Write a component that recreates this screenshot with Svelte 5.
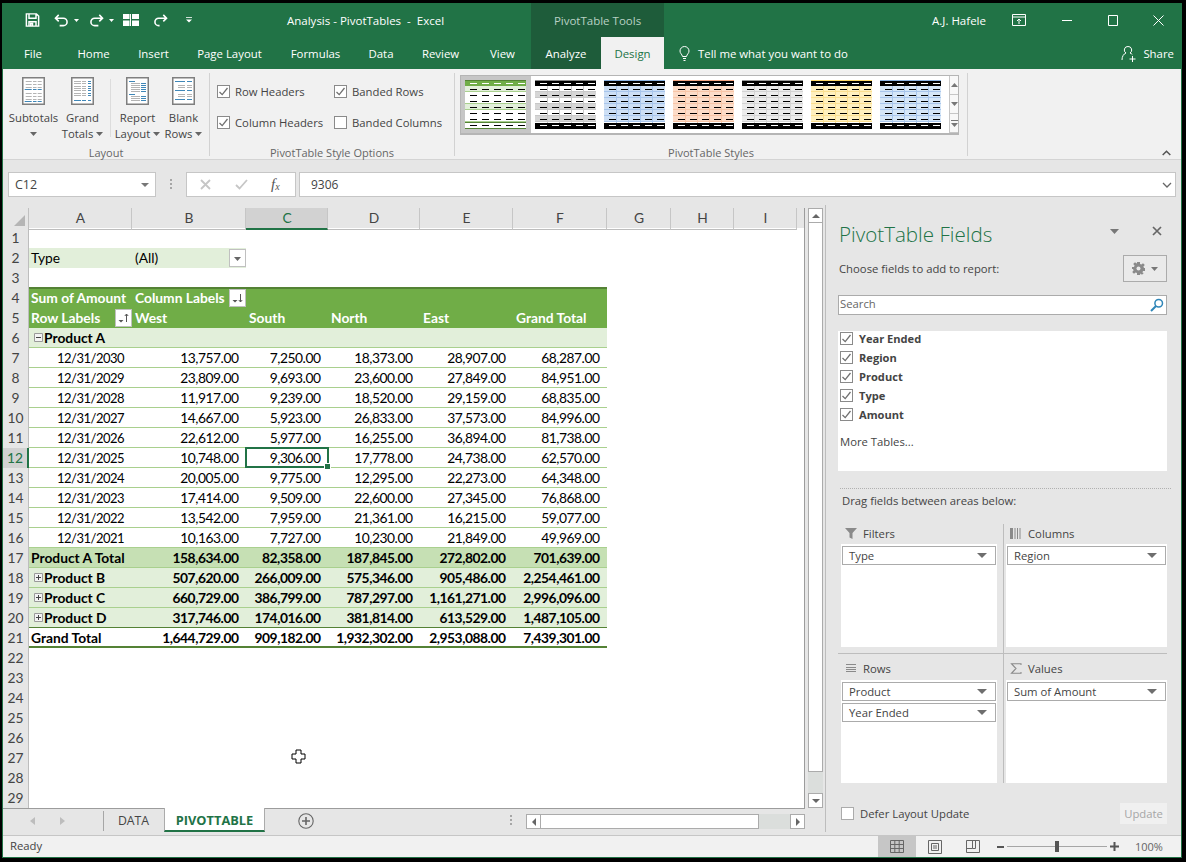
<script lang="ts">
  // ---- sheet data ----
  const rows = [
    { n: 1, kind: "blank", cells: [] },
    { n: 2, kind: "filter", cells: ["Type", "(All)"] },
    { n: 3, kind: "blank", cells: [] },
    { n: 4, kind: "head headtop", cells: ["Sum of Amount", "Column Labels"] },
    { n: 5, kind: "head", cells: ["Row Labels", "West", "South", "North", "East", "Grand Total"] },
    { n: 6, kind: "prod", tree: "minus", cells: ["Product A", "", "", "", "", ""] },
    { n: 7, kind: "item", cells: ["12/31/2030", "13,757.00", "7,250.00", "18,373.00", "28,907.00", "68,287.00"] },
    { n: 8, kind: "item", cells: ["12/31/2029", "23,809.00", "9,693.00", "23,600.00", "27,849.00", "84,951.00"] },
    { n: 9, kind: "item", cells: ["12/31/2028", "11,917.00", "9,239.00", "18,520.00", "29,159.00", "68,835.00"] },
    { n: 10, kind: "item", cells: ["12/31/2027", "14,667.00", "5,923.00", "26,833.00", "37,573.00", "84,996.00"] },
    { n: 11, kind: "item", cells: ["12/31/2026", "22,612.00", "5,977.00", "16,255.00", "36,894.00", "81,738.00"] },
    { n: 12, kind: "item", cells: ["12/31/2025", "10,748.00", "9,306.00", "17,778.00", "24,738.00", "62,570.00"] },
    { n: 13, kind: "item", cells: ["12/31/2024", "20,005.00", "9,775.00", "12,295.00", "22,273.00", "64,348.00"] },
    { n: 14, kind: "item", cells: ["12/31/2023", "17,414.00", "9,509.00", "22,600.00", "27,345.00", "76,868.00"] },
    { n: 15, kind: "item", cells: ["12/31/2022", "13,542.00", "7,959.00", "21,361.00", "16,215.00", "59,077.00"] },
    { n: 16, kind: "item", cells: ["12/31/2021", "10,163.00", "7,727.00", "10,230.00", "21,849.00", "49,969.00"] },
    { n: 17, kind: "total", cells: ["Product A Total", "158,634.00", "82,358.00", "187,845.00", "272,802.00", "701,639.00"] },
    { n: 18, kind: "prod", tree: "plus", cells: ["Product B", "507,620.00", "266,009.00", "575,346.00", "905,486.00", "2,254,461.00"] },
    { n: 19, kind: "prod", tree: "plus", cells: ["Product C", "660,729.00", "386,799.00", "787,297.00", "1,161,271.00", "2,996,096.00"] },
    { n: 20, kind: "prod last", tree: "plus", cells: ["Product D", "317,746.00", "174,016.00", "381,814.00", "613,529.00", "1,487,105.00"] },
    { n: 21, kind: "grand", cells: ["Grand Total", "1,644,729.00", "909,182.00", "1,932,302.00", "2,953,088.00", "7,439,301.00"] },
    ...Array.from({ length: 8 }, (_, i) => ({ n: 22 + i, kind: "blank", cells: [] }))
  ];
  const columns = ["A", "B", "C", "D", "E", "F", "G", "H", "I"];
  const tabs = ["File", "Home", "Insert", "Page Layout", "Formulas", "Data", "Review", "View"];

  // ribbon document icons: [x, y, width, colour]
  const G = "#b4b4b4";
  const B = "#3f87b8";
  const row3 = (y, c1, c2, c3, xs) => [[xs[0], y, xs[1], c1], [xs[2], y, xs[3], c2], [xs[4], y, xs[5], c3]];
  const sub = [3.7, 6, 11, 3.5, 15.7, 4];
  const grand = [3, 7, 11, 4, 17, 3];
  const iconSubtotals = [4, 7, 10, 16, 19, 22].flatMap((y) => row3(y, G, G, G, sub))
    .concat(row3(12, B, B, B, [2.7, 7, 11, 3.5, 15.7, 4]), row3(24, B, B, B, [2.7, 7, 11, 3.5, 15.7, 4]));
  const iconGrand = [4, 6, 9, 11, 13, 16, 18].flatMap((y) => row3(y, G, G, B, grand)).concat(row3(23, B, B, B, grand));
  const iconReport = [
    [3, 4, 6, B], [5, 6, 9, G], [15, 6, 5, B], [5, 8, 9, G], [15, 8, 5, B], [5, 10, 9, G], [15, 10, 5, B],
    [5, 12, 9, G], [15, 12, 5, B], [5, 14, 9, G], [15, 14, 5, B], [3, 17, 6, B], [5, 19, 9, G], [15, 19, 5, B],
    [5, 21, 9, G], [15, 21, 5, B], [5, 23, 9, G], [15, 23, 5, B]
  ];
  const iconBlank = [
    [3, 4, 10, B], [15, 4, 5, B], [6, 8, 7, G], [15, 8, 5, G], [6, 10, 7, G], [15, 10, 5, G],
    [3, 13, 10, B], [15, 13, 5, B], [6, 17, 7, G], [15, 17, 5, G], [6, 19, 7, G], [15, 19, 5, G], [3, 22, 10, B], [15, 22, 5, B]
  ];

  // style gallery
  const gallery = [
    { bar: "#70ad47", top: "#548235", dash: "#fff", a: "#e2efda", b: "#fff", line: "#a9d08e", green: true },
    { bar: "#000", top: "#888", dash: "#fff", a: "#fff", b: "#d6d6d6", line: "#c8c8c8", cols: true },
    { bar: "#000", top: "#8eb4e3", dash: "#fff", a: "#cddff5", b: "#cddff5", line: "#a9c6ec", cols: true },
    { bar: "#000", top: "#f4a582", dash: "#fff", a: "#fcdcc8", b: "#fcdcc8", line: "#f8c6a8", cols: true },
    { bar: "#000", top: "#999", dash: "#fff", a: "#ececec", b: "#ececec", line: "#d4d4d4", cols: true },
    { bar: "#000", top: "#ffd966", dash: "#fff", a: "#fff0bf", b: "#fff0bf", line: "#fbdf90", cols: true },
    { bar: "#000", top: "#8eb4e3", dash: "#fff", a: "#d5e6f7", b: "#d5e6f7", line: "#a9c6ec", cols: true }
  ];
  const dashX = [5, 17, 29, 41, 53];
  const rowY = [6, 12, 18, 24, 30, 36];
  const bandFill = (s, r) => {
    if (s.green) return r === 0 || r === 3 ? s.a : s.b;
    return r % 2 === 0 ? s.a : s.b;
  };
</script>

{#snippet docIcon(lines)}
  <svg class="doc" width="23" height="28" viewBox="0 0 23 28">
    <rect x="0.75" y="0.75" width="21.5" height="26.5" fill="#fff" stroke="#7f7f7f" stroke-width="1.5" />
    {#each lines as l}
      <rect x={l[0]} y={l[1]} width={l[2]} height="1" fill={l[3]} />
    {/each}
  </svg>
{/snippet}

{#snippet check(on)}
  <span class="box">
    {#if on}
      <svg width="11" height="11" viewBox="0 0 11 11"><path d="M1.5 6 L4.2 8.6 L9.5 2" fill="none" stroke="#6f6f6f" stroke-width="1.3" /></svg>
    {/if}
  </span>
{/snippet}

{#snippet caret()}
  <svg class="caret" width="7" height="4" viewBox="0 0 7 4"><path d="M0 0h7L3.5 4z" fill="#666" /></svg>
{/snippet}

{#snippet fieldItem(label)}
  <div class="field-item"><span>{label}</span><svg width="10" height="5" viewBox="0 0 10 5"><path d="M0 0h10L5 5z" fill="#6e6e6e" /></svg></div>
{/snippet}

{#snippet filterBtn(kind)}
  <span class="pf-btn">
    <svg width="15" height="15" viewBox="0 0 15 15">
      {#if kind === "drop"}
        <path d="M4 6h7L7.5 10z" fill="#666" />
      {:else}
        <path d="M2.5 9h5L5 11.5z" fill="#555" />
        <path d="M10.5 3v8M8.8 {kind === 'asc' ? '5' : '9'}l1.7 {kind === 'asc' ? '-2' : '2'}l1.7 {kind === 'asc' ? '2' : '-2'}" fill="none" stroke="#555" stroke-width="1" />
      {/if}
    </svg>
  </span>
{/snippet}

<div class="window">
  <!-- Title bar -->
  <header class="titlebar">
    <div class="qat">
      <svg class="q1" width="15" height="14" viewBox="0 0 16 16"><path d="M1 1h11.5L15 3.5V15H1z M4 1v5h8V1 M4 15v-5h8v5 M6 12h2v3H6z" fill="none" stroke="#fff" stroke-width="1.7" /></svg>
      <svg class="q2" width="15" height="13" viewBox="0 0 16 14"><path d="M5 1L1.5 4.500 5 8M2 4.500h8a4 4 0 0 1 0 8H6" fill="none" stroke="#fff" stroke-width="1.700" /></svg>
      <svg class="qc" width="5" height="3" viewBox="0 0 5 3"><path d="M0 0h5L2.500 3z" fill="#fff" /></svg>
      <svg class="q3" width="15" height="13" viewBox="0 0 16 14"><path d="M11 1l3.500 3.500L11 8M14 4.500H6a4 4 0 0 0 0 8h4" fill="none" stroke="#fff" stroke-width="1.700" /></svg>
      <svg class="qc" width="5" height="3" viewBox="0 0 5 3"><path d="M0 0h5L2.500 3z" fill="#fff" /></svg>
      <svg class="q4" width="16" height="12" viewBox="0 0 16 12"><path d="M0 0h6.500v5H0zM9 0h7v5H9zM0 6.500h6.500V12H0zM9 6.500h7V12H9z" fill="#fff" /><path d="M7.500 0v12" stroke="#fff" /></svg>
      <svg class="q5" width="15" height="13" viewBox="0 0 16 14"><path d="M11 1l3.500 3.500L11 8M14 4.500H6a4 4 0 0 0 0 8h1" fill="none" stroke="#fff" stroke-width="1.700" /></svg>
      <svg class="q6" width="6" height="6" viewBox="0 0 7 7"><path d="M0 .5h7" stroke="#fff" /><path d="M0 3h7L3.500 6.500z" fill="#fff" /></svg>
    </div>
    <div class="doc-title">Analysis - PivotTables&nbsp; - &nbsp;Excel</div>
    <div class="tools">PivotTable Tools</div>
    <div class="user">A.J. Hafele</div>
    <div class="winbtns">
      <svg width="14" height="12" viewBox="0 0 14 12"><path d="M.5.500h13v11H.5zM.5 3h13M7 10V5M5 7l2-2 2 2" fill="none" stroke="#fff" /></svg>
      <svg width="11" height="11" viewBox="0 0 11 11"><path d="M0 5.500h10" stroke="#fff" /></svg>
      <svg width="11" height="11" viewBox="0 0 11 11"><path d="M.5.500h9v10h-9z" fill="none" stroke="#fff" /></svg>
      <svg width="11" height="11" viewBox="0 0 11 11"><path d="M.5.500l10 10M10.500.500l-10 10" stroke="#fff" fill="none" /></svg>
    </div>
  </header>

  <!-- Ribbon tabs -->
  <nav class="tabs">
    {#each tabs as t}<div class="tab">{t}</div>{/each}
    <div class="tab analyze">Analyze</div>
    <div class="tab design">Design</div>
    <div class="tellme">
      <svg width="11" height="15" viewBox="0 0 11 15"><path d="M3.500 10.500C3 8 1 7.500 1 5a4.500 4.500 0 0 1 9 0c0 2.500-2 3-2.500 5.500zM4 12.500h3M4.500 14.500h2" fill="none" stroke="#fff" /></svg>
      <span>Tell me what you want to do</span>
    </div>
    <div class="share">
      <svg width="16" height="17" viewBox="0 0 16 17"><path d="M7 1.500a3.500 3.500 0 0 1 2 6.500c1 .4 1.700.9 2.300 1.500M5 8a3.500 3.500 0 0 1 2-6.500M5 8c-2.500 1-4 3.500-4 7M11.500 11v6M8.500 14h6" fill="none" stroke="#fff" /></svg>
      <span>Share</span>
    </div>
  </nav>

  <!-- Ribbon -->
  <section class="ribbon">
    <div class="rgroup layout">
      <div class="cmds">
        <div class="cmd">{@render docIcon(iconSubtotals)}<div class="lbl">Subtotals</div><div class="lbl">{@render caret()}</div></div>
        <div class="cmd">{@render docIcon(iconGrand)}<div class="lbl">Grand</div><div class="lbl">Totals {@render caret()}</div></div>
        <div class="vsep"></div>
        <div class="cmd">{@render docIcon(iconReport)}<div class="lbl">Report</div><div class="lbl">Layout {@render caret()}</div></div>
        <div class="cmd">{@render docIcon(iconBlank)}<div class="lbl">Blank</div><div class="lbl">Rows {@render caret()}</div></div>
      </div>
      <div class="group-name">Layout</div>
    </div>
    <div class="rgroup options">
      <div class="checks">
        <label class="chk">{@render check(true)}Row Headers</label>
        <label class="chk">{@render check(true)}Banded Rows</label>
        <label class="chk">{@render check(true)}Column Headers</label>
        <label class="chk">{@render check(false)}Banded Columns</label>
      </div>
      <div class="group-name">PivotTable Style Options</div>
    </div>
    <div class="rgroup styles">
      <div class="gallery">
        {#each gallery as s, i}
          <div class="thumb" class:selected={i === 0}>
            <svg width="61" height="49" viewBox="0 0 61 49" shape-rendering="crispEdges">
              {#each rowY as y, r}
                <rect x="0" {y} width="61" height="6" fill={bandFill(s, r)} />
                <rect x="0" y={y + 5} width="61" height="1" fill={s.green && (r === 1 || r === 4) ? "#fff" : s.line} />
              {/each}
              {#if s.cols}
                {#each [12, 24, 36, 48] as x}<rect {x} y="6" width="1" height="37" fill={s.line} />{/each}
              {/if}
              <rect x="0" y="0" width="61" height="6" fill={s.bar} />
              <rect x="0" y="0" width="61" height="1" fill={s.top} />
              {#if s.green}
                <rect x="0" y="42" width="61" height="6" fill="#fff" />
                <rect x="0" y="42" width="61" height="1" fill="#548235" />
                <rect x="0" y="48" width="61" height="1" fill="#548235" />
              {:else}
                <rect x="0" y="43" width="61" height="6" fill={s.bar} />
                {#each dashX as x}<rect {x} y="45" width="7" height="1" fill={s.dash} />{/each}
              {/if}
              {#each dashX as x}
                <rect {x} y="3" width="7" height="1" fill={s.dash} />
                {#each rowY as y}<rect {x} y={y + 3} width="7" height="1" fill="#000" />{/each}
                {#if s.green}<rect {x} y="45" width="7" height="1" fill="#000" />{/if}
              {/each}
            </svg>
          </div>
        {/each}
        <div class="gal-scroll">
          <div><svg width="7" height="4" viewBox="0 0 7 4"><path d="M3.500 0L7 4H0z" fill="#777" /></svg></div>
          <div><svg width="7" height="4" viewBox="0 0 7 4"><path d="M0 0h7L3.500 4z" fill="#777" /></svg></div>
          <div><svg width="7" height="7" viewBox="0 0 7 7"><path d="M0 .5h7" stroke="#777" /><path d="M0 3h7L3.500 7z" fill="#777" /></svg></div>
        </div>
      </div>
      <div class="group-name">PivotTable Styles</div>
    </div>
    <svg class="collapse" width="9" height="6" viewBox="0 0 9 6"><path d="M.7 5L4.500 1.200 8.300 5" fill="none" stroke="#555" stroke-width="1.500" /></svg>
  </section>

  <!-- Formula bar -->
  <section class="formula">
    <div class="namebox"><span>C12</span><svg width="8" height="4" viewBox="0 0 8 4"><path d="M0 0h8L4 4z" fill="#777" /></svg></div>
    <div class="grip"><i></i><i></i><i></i></div>
    <div class="fbtns">
      <svg width="11" height="11" viewBox="0 0 11 11"><path d="M1 1l9 9M10 1l-9 9" stroke="#c6c6c6" stroke-width="1.800" fill="none" /></svg>
      <svg width="13" height="11" viewBox="0 0 13 11"><path d="M1 6l3.500 3.500L12 1" stroke="#c6c6c6" stroke-width="1.800" fill="none" /></svg>
      <span class="fx">f<sub>x</sub></span>
    </div>
    <div class="finput"><span>9306</span><svg width="10" height="6" viewBox="0 0 10 6"><path d="M1 1l4 4 4-4" fill="none" stroke="#666" stroke-width="1.300" /></svg></div>
  </section>

  <!-- Main area -->
  <div class="main">
    <div class="workbook">
      <div class="sheet-row">
        <div class="grid">
          <div class="row hdr">
            <div class="corner"><svg width="11" height="11" viewBox="0 0 11 11"><path d="M11 0v11H0z" fill="#b5b5b5" /></svg></div>
            {#each columns as c}<div class="colhead" class:sel={c === "C"}>{c}</div>{/each}
            <div></div>
          </div>
          {#each rows as r}
            <div class="row {r.kind}">
              <div class="rowhead" class:sel={r.n === 12}>{r.n}</div>
              {#if r.kind !== "blank"}
                {#each r.cells as cell, i}
                  <div class="cell" class:first={i === 0} class:current={r.n === 12 && i === 2}>
                    {#if i === 0 && r.tree}
                      <span class="tree">
                        <svg width="9" height="9" viewBox="0 0 9 9"><path d="M.5.500h8v8h-8z" fill="#f4f4f4" stroke="#9a9a9a" /><path d={r.tree === "plus" ? "M2 4.500h5M4.500 2v5" : "M2 4.500h5"} stroke="#444" /></svg>
                      </span>
                    {/if}
                    <span class="val">{cell}</span>
                    {#if r.n === 5 && i === 0}{@render filterBtn("asc")}{/if}
                    {#if r.n === 2 && i === 1}{@render filterBtn("drop")}{/if}
                    {#if r.n === 4 && i === 1}{@render filterBtn("desc")}{/if}
                  </div>
                {/each}
              {/if}
            </div>
          {/each}
          <svg class="pointer" width="15" height="15" viewBox="0 0 15 15"><path d="M5 1h5v4h4v5h-4v4H5v-4H1V5h4z" fill="#fff" stroke="#000" /></svg>
        </div>
        <div class="vscroll">
          <div class="sbtn"><svg width="8" height="4" viewBox="0 0 8 4"><path d="M4 0l4 4H0z" fill="#666" /></svg></div>
          <div class="vthumb"></div>
          <div class="vtrough"></div>
          <div class="sbtn"><svg width="8" height="4" viewBox="0 0 8 4"><path d="M0 0h8L4 4z" fill="#666" /></svg></div>
        </div>
      </div>
      <div class="tabbar">
        <svg class="nav1" width="5" height="8" viewBox="0 0 5 8"><path d="M5 0v8L0 4z" fill="#bdbdbd" /></svg>
        <svg class="nav2" width="5" height="8" viewBox="0 0 5 8"><path d="M0 0v8l5-4z" fill="#bdbdbd" /></svg>
        <div class="tabsep"></div>
        <div class="sheet-tab">DATA</div>
        <div class="sheet-tab active">PIVOTTABLE</div>
        <svg class="addsheet" width="16" height="16" viewBox="0 0 16 16"><circle cx="8" cy="8" r="7.200" fill="none" stroke="#666" stroke-width="1.100" /><path d="M8 4v8M4 8h8" stroke="#666" stroke-width="1.600" /></svg>
        <div class="hgrip"><i></i><i></i><i></i></div>
        <div class="hscroll">
          <div class="sbtn"><svg width="4" height="8" viewBox="0 0 4 8"><path d="M4 0v8L0 4z" fill="#666" /></svg></div>
          <div class="hthumb"></div>
          <div class="htrough"></div>
          <div class="sbtn"><svg width="4" height="8" viewBox="0 0 4 8"><path d="M0 0v8l4-4z" fill="#666" /></svg></div>
        </div>
      </div>
    </div>

    <!-- Field list -->
    <aside class="panel">
      <div class="panel-head">
        <h2>PivotTable Fields</h2>
        <svg class="pcaret" width="9" height="5" viewBox="0 0 9 5"><path d="M0 0h9L4.500 5z" fill="#777" /></svg>
        <svg class="pclose" width="10" height="10" viewBox="0 0 10 10"><path d="M1 1l8 8M9 1l-8 8" stroke="#666" stroke-width="1.700" /></svg>
      </div>
      <div class="choose">
        <span>Choose fields to add to report:</span>
        <div class="gear">
          <svg width="13" height="13" viewBox="0 0 13 13"><path d="M5 0h3v2l1.400.6L11 1.200 12.800 3l-1.400 1.600.6 1.400h1v3h-2l-.6 1.400L11.800 11 10 12.800l-1.600-1.400L8 13H5v-2l-1.400-.6L2 11.800.2 10l1.400-1.600L1 7H0V5h2l.6-1.400L1.200 2 3 .2l1.600 1.400L5 1z" fill="#8a8a8a" /><circle cx="6.500" cy="6.500" r="2" fill="#eaeaea" /></svg>
          <svg width="7" height="4" viewBox="0 0 7 4"><path d="M0 0h7L3.500 4z" fill="#777" /></svg>
        </div>
      </div>
      <div class="search">
        <span>Search</span>
        <svg width="14" height="14" viewBox="0 0 14 14"><circle cx="8.700" cy="5.300" r="3.800" fill="none" stroke="#2f86b8" stroke-width="1.500" /><path d="M6 8L1 13" stroke="#2f86b8" stroke-width="2" /></svg>
      </div>
      <div class="fields">
        {#each ["Year Ended", "Region", "Product", "Type", "Amount"] as f}
          <div class="field">{@render check(true)}<b>{f}</b></div>
        {/each}
        <div class="more">More Tables...</div>
      </div>
      <div class="dotted"></div>
      <div class="drag">Drag fields between areas below:</div>
      <div class="areas">
        <div class="area left upper">
          <div class="area-title">
            <svg width="13" height="11" viewBox="0 0 13 11"><path d="M0 0h12L7.500 5v6l-3-1.500V5z" fill="#8a8a8a" /></svg>
            <span>Filters</span>
          </div>
          <div class="area-box">{@render fieldItem("Type")}</div>
        </div>
        <div class="area right upper">
          <div class="area-title">
            <svg width="13" height="11" viewBox="0 0 13 11"><path d="M0 0h3v11H0z" fill="#8a8a8a" /><path d="M5 0v11M7.500 0v11M10 0v11" stroke="#8a8a8a" /></svg>
            <span>Columns</span>
          </div>
          <div class="area-box">{@render fieldItem("Region")}</div>
        </div>
        <div class="area left">
          <div class="area-title">
            <svg width="13" height="11" viewBox="0 0 13 11"><path d="M1 1.500h10M1 4.500h10M1 6.500h10M1 8.500h10" stroke="#8a8a8a" /></svg>
            <span>Rows</span>
          </div>
          <div class="area-box">{@render fieldItem("Product")}{@render fieldItem("Year Ended")}</div>
        </div>
        <div class="area right">
          <div class="area-title">
            <svg width="13" height="11" viewBox="0 0 13 11"><path d="M11 2V.7H1.500L6 5.500 1.500 10.300H11V9" fill="none" stroke="#8a8a8a" stroke-width="1.100" /></svg>
            <span>Values</span>
          </div>
          <div class="area-box">{@render fieldItem("Sum of Amount")}</div>
        </div>
      </div>
      <div class="panel-foot">
        <span class="box plain"></span>
        <span class="defer">Defer Layout Update</span>
        <div class="update">Update</div>
      </div>
    </aside>
  </div>

  <!-- Status bar -->
  <footer class="status">
    <span class="ready">Ready</span>
    <div class="views">
      <div class="view on"><svg width="14" height="13" viewBox="0 0 14 13"><path d="M.5.500h13v12H.5zM.5 4.500h13M.5 8.500h13M4.800.500v12M9.200.500v12" fill="none" stroke="#666" /></svg></div>
      <div class="view"><svg width="14" height="14" viewBox="0 0 14 14"><path d="M.5.500h13v13H.5z" fill="none" stroke="#666" /><path d="M3.500 3.500h7v7h-7zM5 6h4M5 8h4" fill="none" stroke="#666" /></svg></div>
      <div class="view"><svg width="14" height="13" viewBox="0 0 14 13"><path d="M.5.500h13v12H.5zM.5 8.500h6V.5M6.500 8.500h3V.5" fill="none" stroke="#666" /></svg></div>
    </div>
    <div class="zoom">
      <i class="minus"></i>
      <div class="slider"><i></i></div>
      <svg width="9" height="9" viewBox="0 0 9 9"><path d="M0 4.500h9M4.500 0v9" stroke="#555" stroke-width="2" /></svg>
      <span>100%</span>
    </div>
  </footer>
</div>

<style>
:global(body) {
  margin: 0;
  background: #000;
}

.window {
  box-sizing: border-box;
  width: 1180px;
  height: 855px;
  margin: 3px 0 0 2px;
  border-left: 1px solid #217346;
  border-right: 1px solid #217346;
  border-bottom: 1px solid #217346;
  background: #f1f1f1;
  display: flex;
  flex-direction: column;
  font-family: "Open Sans", "Liberation Sans", sans-serif;
  font-size: 11.3px;
  color: #444;
  overflow: hidden;
  position: relative;
}

svg {
  display: block;
  flex: none;
}

/* Title bar */
.titlebar {
  height: 34px;
  flex: none;
  background: #217346;
  display: flex;
  align-items: center;
  color: #fff;
  font-size: 11.5px;
}

.qat {
  width: 284px;
  flex: none;
  display: flex;
  align-items: center;
  padding-left: 22px;
  box-sizing: border-box;
}

.q2 { margin-left: 14px; }
.qc { margin-left: 5px; }
.q3 { margin-left: 10px; }
.q4 { margin-left: 9px; }
.q5 { margin-left: 14px; }
.q6 { margin-left: 18px; }

.doc-title {
  width: 244px;
  flex: none;
}

.tools {
  width: 133px;
  height: 100%;
  flex: none;
  background: #1e5c3a;
  color: #b9d1c4;
  display: flex;
  align-items: center;
  justify-content: center;
}

.user {
  margin-left: 268px;
  width: 80px;
  flex: none;
}

.winbtns {
  display: flex;
  align-items: center;
}

.winbtns svg:nth-child(1) { margin-right: 36px; }
.winbtns svg:nth-child(2) { margin-right: 35px; }
.winbtns svg:nth-child(3) { margin-right: 34px; }

/* Tabs */
.tabs {
  height: 32px;
  flex: none;
  background: #217346;
  display: grid;
  grid-template-columns: 60px 61px 59px 93px 79px 52px 67px 57px 70px 63px 1fr auto;
  color: #fff;
  font-size: 11.4px;
}

.tab {
  display: flex;
  align-items: center;
  justify-content: center;
}

.tab.analyze {
  background: #1e5c3a;
}

.tab.design {
  background: #f1f1f1;
  color: #217346;
}

.tellme {
  display: flex;
  align-items: center;
  gap: 8px;
  padding-left: 15px;
}

.share {
  display: flex;
  align-items: center;
  gap: 6px;
  padding-right: 7px;
}

/* Ribbon */
.ribbon {
  height: 91px;
  flex: none;
  background: #f1f1f1;
  border-bottom: 1px solid #d4d4d4;
  box-sizing: border-box;
  display: flex;
  position: relative;
}

.rgroup {
  display: flex;
  flex-direction: column;
  border-right: 1px solid #d2d2d2;
  margin-top: 4px;
  margin-bottom: 3px;
  box-sizing: border-box;
  flex: none;
}

.group-name {
  margin-top: auto;
  margin-bottom: -4px;
  text-align: center;
  font-size: 11px;
  color: #666;
  line-height: 14px;
}

.layout { width: 207px; }
.options { width: 245px; }
.styles { width: 513px; }

.cmds {
  display: flex;
  padding-left: 6px;
  align-items: flex-start;
}

.cmd {
  display: flex;
  flex-direction: column;
  align-items: center;
  width: 49px;
  padding-top: 4px;
}

.cmd:nth-child(4) { width: 47px; }
.cmd:nth-child(5) { width: 45px; }

.vsep {
  width: 1px;
  height: 58px;
  margin: 6px 3px 0;
  background: #dcdcdc;
}

.doc { margin-bottom: 5px; }

.lbl {
  height: 16px;
  line-height: 16px;
  white-space: nowrap;
  display: flex;
  align-items: center;
  gap: 3px;
  color: #444;
}

.checks {
  display: grid;
  grid-template-columns: 117px 1fr;
  grid-auto-rows: 31px;
  padding: 3px 0 0 7px;
}

.chk {
  display: flex;
  align-items: center;
  gap: 5px;
  white-space: nowrap;
  padding-bottom: 1px;
}

.box {
  box-sizing: border-box;
  width: 13px;
  height: 13px;
  border: 1px solid #8a8a8a;
  background: #fff;
  display: inline-flex;
  align-items: center;
  justify-content: center;
  flex: none;
}

.gallery {
  margin: 2px 0 0 5px;
  width: 499px;
  height: 60px;
  box-sizing: border-box;
  border: 1px solid #b5b5b5;
  border-bottom-width: 2px;
  background: #fff;
  display: flex;
}

.thumb {
  width: 69px;
  padding: 4px 4px 0;
  box-sizing: border-box;
}

.thumb.selected {
  background: #c6c6c6;
  width: 70px;
  padding-right: 5px;
}

.gal-scroll {
  margin-left: 4px;
  width: 14px;
  border-left: 1px solid #c6c6c6;
  display: flex;
  flex-direction: column;
  background: #f8f8f8;
}

.gal-scroll div {
  flex: 1;
  display: flex;
  align-items: center;
  justify-content: center;
  border-bottom: 1px solid #c6c6c6;
}

.collapse {
  position: absolute;
  left: 1159px;
  top: 81px;
}

/* Formula bar */
.formula {
  height: 45px;
  flex: none;
  background: #e6e6e6;
  display: flex;
  align-items: flex-start;
  padding: 12px 0 0 5px;
  box-sizing: border-box;
}

.namebox, .fbtns, .finput {
  height: 25px;
  box-sizing: border-box;
  border: 1px solid #c6c6c6;
  background: #fff;
  display: flex;
  align-items: center;
}

.namebox {
  width: 148px;
  justify-content: space-between;
  padding: 0 6px;
  font-size: 12.5px;
}

.grip {
  width: 30px;
  display: flex;
  flex-direction: column;
  align-items: center;
  gap: 2px;
  padding-top: 7px;
}

.grip i, .hgrip i {
  display: block;
  width: 2px;
  height: 2px;
  background: #a6a6a6;
}

.fbtns {
  width: 110px;
  padding-left: 13px;
  gap: 24px;
}

.fx {
  font-family: "Liberation Serif", serif;
  font-style: italic;
  font-size: 15px;
  color: #555;
  margin-left: -1px;
}

.fx sub {
  font-size: 10px;
  vertical-align: -1px;
}

.finput {
  margin-left: 3px;
  width: 877px;
  justify-content: space-between;
  padding: 0 3px 0 11px;
  font-size: 12px;
}

/* Sheet */
.main {
  flex: 1;
  min-height: 0;
  display: flex;
  background: #e6e6e6;
}

.workbook {
  width: 822px;
  flex: none;
  display: flex;
  flex-direction: column;
  padding-top: 3px;
  box-sizing: border-box;
}

.sheet-row {
  height: 600px;
  flex: none;
  display: flex;
}

.grid {
  width: 801px;
  height: 600px;
  overflow: hidden;
  background: #fff;
  position: relative;
  border-bottom: 1px solid #9c9c9c;
  border-right: 1px solid #9c9c9c;
  font-family: Lato, "Liberation Sans", sans-serif;
  font-size: 13.8px;
  color: #000;
}

.row {
  display: grid;
  grid-template-columns: 26px 103px 114px 82px 92px 93px 94px 64px 63px 63px 7px;
  height: 20px;
}

.row.hdr {
  background: #e6e6e6;
}

.corner {
  display: flex;
  justify-content: flex-end;
  align-items: flex-end;
  padding: 0 3px 3px 0;
  border-right: 1px solid #c0c0c0;
  border-bottom: 1px solid #c0c0c0;
}

.colhead {
  box-sizing: border-box;
  text-align: center;
  line-height: 20px;
  padding-left: 1px;
  color: #444;
  border-right: 1px solid #c6c6c6;
  border-bottom: 1px solid #bdbdbd;
}

.colhead.sel {
  background: #d2d2d2;
  color: #217346;
  border-bottom: 2px solid #217346;
}

.rowhead {
  box-sizing: border-box;
  background: #e6e6e6;
  color: #444;
  text-align: center;
  line-height: 20px;
  border-right: 1px solid #bdbdbd;
  border-bottom: 1px solid #c6c6c6;
}

.rowhead.sel {
  background: #d2d2d2;
  color: #217346;
  border-right: 2px solid #217346;
}

.cell {
  box-sizing: border-box;
  height: 20px;
  line-height: 20px;
  padding: 0 7.5px 0 0;
  text-align: right;
  white-space: nowrap;
  display: flex;
  justify-content: flex-end;
  position: relative;
  letter-spacing: -0.45px;
}

.cell.first {
  justify-content: flex-start;
  padding-left: 2px;
  letter-spacing: 0;
}

.tree {
  display: inline-flex;
  align-items: center;
  margin: -1px 1px 0 3px;
}

/* row kinds */
.filter .cell {
  background: #e2efda;
  justify-content: flex-start;
  padding-left: 3px;
  letter-spacing: 0;
}

.filter .cell.first {
  padding-left: 2px;
}

.head .cell {
  background: #70ad47;
  color: #fff;
  font-weight: 700;
  justify-content: flex-start;
  padding-left: 3px;
  letter-spacing: 0;
}

.head .cell.first {
  padding-left: 2px;
}

.headtop .cell {
  box-shadow: inset 0 1px 0 #548235, 0 -1px 0 #548235;
}

.headtop::after {
  content: "";
  grid-column: 4 / 8;
  background: #70ad47;
  box-shadow: inset 0 1px 0 #548235, 0 -1px 0 #548235;
}

.prod .cell {
  background: #e2efda;
  font-weight: 700;
  border-bottom: 1px solid #a9d08e;
}

.prod.last .cell {
  border-bottom: 1px solid #548235;
}

.item .cell {
  border-bottom: 1px solid #a9d08e;
}

.item .cell.first {
  padding-left: 28px;
  font-size: 13px;
  letter-spacing: -0.5px;
}

.total .cell {
  background: #c6e0b4;
  font-weight: 700;
  border-bottom: 1px solid #a9d08e;
}

.grand .cell {
  font-weight: 700;
  border-bottom: 2px solid #548235;
}

.cell.current::after {
  content: "";
  position: absolute;
  inset: -1px -1px -1px -1px;
  border: 2px solid #217346;
  pointer-events: none;
}

.cell.current::before {
  content: "";
  position: absolute;
  right: -3px;
  bottom: -3px;
  width: 5px;
  height: 5px;
  background: #217346;
  border: 1px solid #fff;
  z-index: 1;
}

.pf-btn {
  position: absolute;
  right: 0;
  top: 1px;
  width: 17px;
  height: 18px;
  box-sizing: border-box;
  background: #fff;
  border: 1px solid #c0c0c0;
  display: flex;
  align-items: center;
  justify-content: center;
}

.pointer {
  position: absolute;
  left: 288px;
  top: 541px;
}

.vscroll {
  margin-left: 3px;
  width: 15px;
  display: flex;
  flex-direction: column;
}

.sbtn {
  box-sizing: border-box;
  width: 15px;
  height: 15px;
  flex: none;
  background: #fff;
  border: 1px solid #ababab;
  display: flex;
  align-items: center;
  justify-content: center;
}

.vthumb {
  box-sizing: border-box;
  height: 549px;
  background: #fff;
  border: 1px solid #ababab;
  border-top: none;
}

.vtrough {
  flex: 1;
  background: #dbdedc;
}

.tabbar {
  height: 27px;
  flex: none;
  display: flex;
  align-items: flex-start;
  position: relative;
}

.nav1, .nav2 {
  position: absolute;
  top: 9px;
}

.nav1 { left: 27px; }
.nav2 { left: 57px; }

.tabsep {
  width: 1px;
  height: 20px;
  margin: 3px 0 0 100px;
  background: #a6a6a6;
}

.sheet-tab {
  box-sizing: border-box;
  width: 59px;
  height: 24px;
  text-align: center;
  line-height: 25px;
  font-size: 12.3px;
  color: #444;
}

.sheet-tab.active {
  width: 101px;
  margin-left: 1px;
  background: #fff;
  color: #217346;
  font-weight: 700;
  font-size: 12.8px;
  border-bottom: 2px solid #217346;
  border-left: 1px solid #ababab;
  border-right: 1px solid #ababab;
}

.addsheet {
  margin: 5px 0 0 33px;
}

.hgrip {
  margin: 7px 0 0 196px;
  display: flex;
  flex-direction: column;
  gap: 2px;
}

.hscroll {
  margin: 6px 0 0 14px;
  display: flex;
  height: 15px;
}

.hthumb {
  width: 218px;
  box-sizing: border-box;
  background: #fff;
  border: 1px solid #ababab;
  border-left: none;
}

.htrough {
  width: 31px;
  background: #dbdedc;
}

/* Panel */
.panel {
  flex: 1;
  border-left: 1px solid #bdbdbd;
  padding: 0 14px 0 12px;
  box-sizing: border-box;
  position: relative;
  margin-bottom: 3px;
}

.panel-head {
  height: 60px;
  display: flex;
  align-items: flex-start;
}

.panel-head h2 {
  margin: 15px 0 0 1px;
  font-size: 20.6px;
  font-weight: 300;
  color: #217346;
  line-height: 28px;
  flex: 1;
}

.pcaret {
  margin: 24px 0 0;
}

.pclose {
  margin: 21px 5px 0 33px;
}

.choose {
  position: absolute;
  left: 13px;
  right: 14px;
  top: 50px;
  height: 27px;
  display: flex;
  justify-content: space-between;
  align-items: center;
}

.gear {
  width: 44px;
  height: 27px;
  box-sizing: border-box;
  border: 1px solid #ababab;
  background: #eaeaea;
  display: flex;
  align-items: center;
  justify-content: center;
  gap: 6px;
}

.search {
  box-sizing: border-box;
  margin-top: 30px;
  height: 20px;
  border: 1px solid #ababab;
  background: #fff;
  display: flex;
  align-items: center;
  justify-content: space-between;
  padding: 0 2px 3px 1px;
  color: #666;
  font-size: 11.3px;
}

.search svg {
  margin-top: 3px;
}

.fields {
  margin-top: 16px;
  height: 140px;
  box-sizing: border-box;
  background: #fff;
  padding: 0 2px;
  display: flow-root;
}

.field {
  display: flex;
  align-items: center;
  gap: 6px;
  height: 19px;
  color: #444;
}

.field b {
  font-size: 11.1px;
}

.field:first-child { margin-top: -2px; }

.more {
  margin-top: 8px;
  line-height: 20px;
}

.dotted {
  margin: 17px -4px 0 2px;
  border-top: 1px dotted #b0b0b0;
}

.drag {
  margin-left: 4px;
  line-height: 23px;
}

.areas {
  margin-top: 12px;
  display: grid;
  grid-template-columns: 166px 163px;
  grid-template-rows: 130px 129px;
}

.area {
  display: flex;
  flex-direction: column;
  box-sizing: border-box;
}

.area.left {
  padding: 0 6px 0 3px;
  border-right: 1px solid #bdbdbd;
}

.area.right {
  padding: 0 0 0 2px;
}

.area.upper {
  border-bottom: 1px solid #bdbdbd;
  padding-bottom: 6px;
}

.area-title {
  box-sizing: border-box;
  height: 20px;
  display: flex;
  align-items: center;
  gap: 5px;
  padding-left: 4px;
  padding-bottom: 2px;
  flex: none;
}

.area:not(.upper) .area-title {
  height: 26px;
  padding-top: 2px;
  padding-bottom: 0;
}

.area-box {
  flex: 1;
  background: #fff;
  padding: 2px 1px;
  display: flex;
  flex-direction: column;
  gap: 2px;
}

.field-item {
  box-sizing: border-box;
  height: 19px;
  border: 1px solid #ababab;
  background: #fff;
  display: flex;
  align-items: center;
  justify-content: space-between;
  padding: 0 8px 0 6px;
}

.panel-foot {
  position: absolute;
  left: 15px;
  right: 14px;
  top: 598px;
  height: 21px;
  display: flex;
  align-items: center;
}

.box.plain {
  border-color: #ababab;
}

.defer {
  margin-left: 6px;
}

.update {
  margin-left: auto;
  width: 47px;
  height: 21px;
  line-height: 21px;
  text-align: center;
  background: #f0f0f0;
  color: #a6a6a6;
}

/* Status bar */
.status {
  height: 22px;
  flex: none;
  box-sizing: border-box;
  border-top: 1px solid #c6c6c6;
  background: #f1f1f1;
  display: flex;
  align-items: center;
}

.ready {
  margin-left: 7px;
  padding-bottom: 2px;
}

.views {
  margin-left: auto;
  display: flex;
  height: 100%;
}

.view {
  width: 38px;
  display: flex;
  align-items: center;
  justify-content: center;
}

.view.on {
  background: #c6c6c6;
}

.zoom {
  display: flex;
  align-items: center;
  margin: 0 19px 0 5px;
}

.minus {
  width: 7px;
  height: 2px;
  background: #555;
}

.slider {
  width: 100px;
  height: 1px;
  background: #a6a6a6;
  margin: 0 3px;
  position: relative;
}

.slider i {
  position: absolute;
  left: 48px;
  top: -5px;
  width: 4px;
  height: 11px;
  background: #555;
}

.zoom span {
  margin-left: 16px;
  width: 27px;
  white-space: nowrap;
  color: #666;
  font-size: 11px;
}
</style>
